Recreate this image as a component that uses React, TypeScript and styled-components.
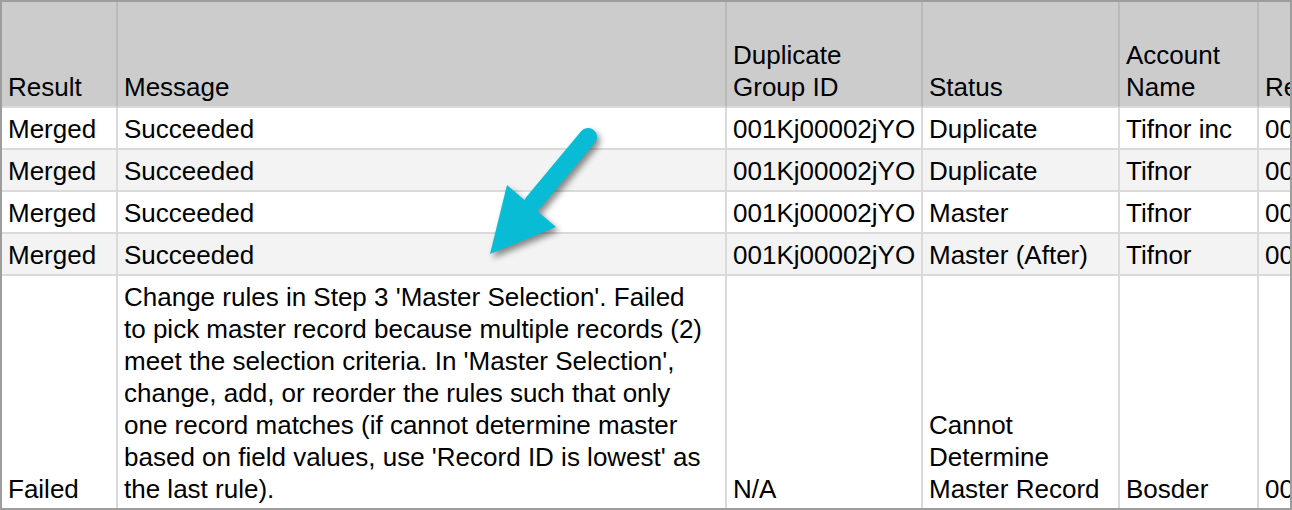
import * as React from "react";
import styled, { createGlobalStyle } from "styled-components";

const GlobalStyle = createGlobalStyle`
  html, body {
    margin: 0;
    padding: 0;
    background: #fff;
  }
  body {
    font-family: "Liberation Sans", Arial, Helvetica, sans-serif;
  }
`;

const SSheet = styled.div`
  position: relative;
  width: 1292px;
  height: 510px;
  box-sizing: border-box;
  border: 2px solid #9d9d9d;
  display: grid;
  grid-template-columns: 116px 609px 196px 197px 139px 1fr;
  grid-template-rows: 106px repeat(4, 42px) 1fr;
  overflow: hidden;
  font-size: 26px;
  line-height: 32px;
  color: #000;
`;

interface CellStyle {
  $shade?: boolean;
  $last?: boolean;
  $bottom?: boolean;
  $clip?: boolean;
  $wrapRoom?: boolean;
}

const SCell = styled.div<CellStyle>`
  display: flex;
  align-items: flex-end;
  box-sizing: border-box;
  min-width: 0;
  padding: ${({ $wrapRoom }) => ($wrapRoom ? "0 20px 3px 6px" : "0 4px 3px 6px")};
  background: ${({ $shade }) => ($shade ? "#f3f3f3" : "#fff")};
  border-right: ${({ $last }) => ($last ? "none" : "2px solid #dadada")};
  border-bottom: ${({ $bottom }) => ($bottom ? "none" : "2px solid #dadada")};
  white-space: ${({ $clip }) => ($clip ? "nowrap" : "normal")};
  overflow: hidden;
`;

const SHead = styled(SCell)`
  background: #cccccc;
  border-right: ${({ $last }) => ($last ? "none" : "2px solid #bababa")};
`;

const SArrow = styled.svg`
  position: absolute;
  left: 468px;
  top: 113px;
  width: 150px;
  height: 160px;
  overflow: visible;
  filter: drop-shadow(3px 4px 3px rgba(0, 0, 0, 0.45));
  pointer-events: none;
`;

const columns = ["Result", "Message", "Duplicate Group ID", "Status", "Account Name", "Record ID"];

const rows: string[][] = [
  ["Merged", "Succeeded", "001Kj00002jYO", "Duplicate", "Tifnor inc", "001Kj00002jYP"],
  ["Merged", "Succeeded", "001Kj00002jYO", "Duplicate", "Tifnor", "001Kj00002jYQ"],
  ["Merged", "Succeeded", "001Kj00002jYO", "Master", "Tifnor", "001Kj00002jYO"],
  ["Merged", "Succeeded", "001Kj00002jYO", "Master (After)", "Tifnor", "001Kj00002jYO"],
  [
    "Failed",
    "Change rules in Step 3 'Master Selection'. Failed to pick master record because multiple records (2) meet the selection criteria. In 'Master Selection', change, add, or reorder the rules such that only one record matches (if cannot determine master based on field values, use 'Record ID is lowest' as the last rule).",
    "N/A",
    "Cannot Determine Master Record",
    "Bosder",
    "001Kj00002jYR",
  ],
];

const Arrow = () => (
  <SArrow viewBox="470 115 150 160">
    <line x1="588" y1="137" x2="533" y2="203" stroke="#08bcd5" strokeWidth="18" strokeLinecap="round" />
    <polygon points="507,185 556,227 490,254" fill="#08bcd5" />
  </SArrow>
);

const App = () => {
  return (
    <>
      <GlobalStyle />
      <SSheet>
        {columns.map((c, i) => (
          <SHead key={c} $last={i === columns.length - 1} $clip={i === columns.length - 1}>
            {c}
          </SHead>
        ))}
        {rows.map((r, ri) =>
          r.map((v, ci) => (
            <SCell
              key={`${ri}-${ci}`}
              $shade={ri % 2 === 1}
              $last={ci === r.length - 1}
              $bottom={ri === rows.length - 1}
              $clip={ci === 2 || ci === r.length - 1}
              $wrapRoom={ci === 1}
            >
              {v}
            </SCell>
          ))
        )}
        <Arrow />
      </SSheet>
    </>
  );
};

export default App;
